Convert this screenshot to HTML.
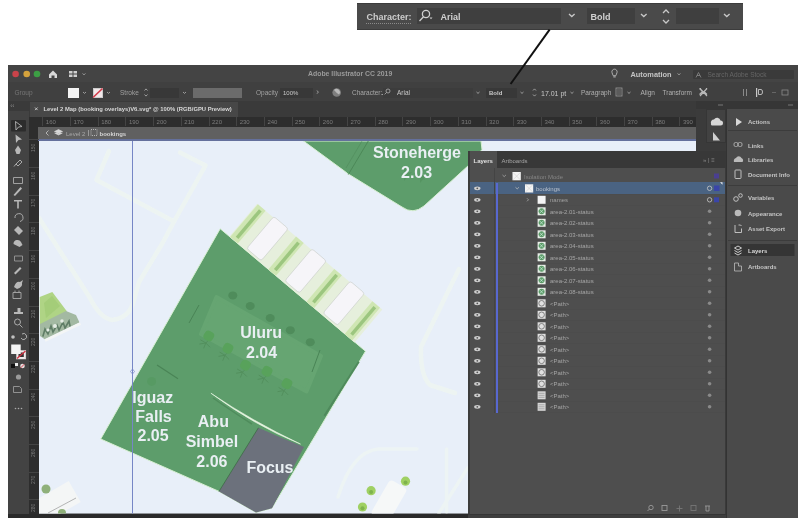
<!DOCTYPE html>
<html><head><meta charset="utf-8">
<style>
*{margin:0;padding:0;box-sizing:border-box}
html,body{width:810px;height:523px;overflow:hidden;background:#fff;font-family:"Liberation Sans",sans-serif}
body{filter:blur(0.4px)}
.a{position:absolute}
.t{position:absolute;white-space:nowrap;line-height:1}
svg{position:absolute;overflow:visible}
</style></head><body>
<!-- callout bar -->
<div class="a" style="left:357px;top:3px;width:386px;height:27px;background:#4a4a4a;border-top:1px solid #3c3c3c;border-bottom:1px solid #3c3c3c"></div>
<div class="t" style="left:366.5px;top:12.5px;font-size:9px;color:#cccccc;font-weight:bold">Character:</div>
<div class="a" style="left:366px;top:23px;width:45px;border-top:1px dotted #8a8a8a"></div>
<div class="a" style="left:417px;top:8px;width:144px;height:16px;background:#3f3f3f"></div>
<div class="a" style="left:587px;top:8px;width:48px;height:16px;background:#3f3f3f"></div>
<div class="a" style="left:676px;top:8px;width:43px;height:16px;background:#3f3f3f"></div>
<div class="t" style="left:440.5px;top:12.5px;font-size:9px;color:#d0d0d0;font-weight:bold">Arial</div>
<div class="t" style="left:590.5px;top:12.5px;font-size:9px;color:#d0d0d0;font-weight:bold">Bold</div>
<svg style="left:0;top:0" width="810" height="40">
 <g fill="none" stroke="#cfcfcf" stroke-width="1.3">
  <circle cx="426" cy="14" r="3.6"/><line x1="423.5" y1="16.8" x2="419.5" y2="21"/>
 </g>
 <path d="M429.5 17.5 l3 0 l-1.5 1.8z" fill="#cfcfcf"/>
 <g fill="none" stroke="#c8c8c8" stroke-width="1.3">
  <path d="M569 14 l2.8 2.6 l2.8 -2.6"/>
  <path d="M641 14 l2.8 2.6 l2.8 -2.6"/>
  <path d="M724 14 l2.8 2.6 l2.8 -2.6"/>
  <path d="M663 13 l3 -3 l3 3"/><path d="M663 20 l3 3 l3 -3"/>
 </g>
</svg>
<!-- app window -->
<div class="a" style="left:8px;top:65px;width:790px;height:453px;background:#3b3b3b"></div>
<div class="a" style="left:8px;top:65px;width:790px;height:17px;background:#444"></div>
<div class="a" style="left:8px;top:82px;width:790px;height:19px;background:#404040"></div>
<div class="a" style="left:8px;top:101px;width:790px;height:16px;background:#3a3a3a"></div>
<div class="a" style="left:30px;top:102px;width:208px;height:15px;background:#474747"></div>
<div class="a" style="left:8px;top:101px;width:21px;height:417px;background:#434343"></div>
<div class="a" style="left:8px;top:101px;width:21px;height:10px;background:#3a3a3a"></div>
<div class="a" style="left:29px;top:117px;width:10px;height:398px;background:#2d2d2d"></div>
<div class="a" style="left:38px;top:117px;width:658px;height:10px;background:#2d2d2d"></div>
<div class="a" style="left:38px;top:127px;width:658px;height:12.5px;background:#606060"></div>
<div class="a" style="left:38px;top:139.3px;width:658px;height:1.7px;background:#64709c"></div>
<div class="a" style="left:8px;top:514px;width:790px;height:4px;background:#2a2a2a"></div>
<svg style="left:0;top:0" width="810" height="110">
 <circle cx="15.6" cy="74" r="3.3" fill="#c9434a"/>
 <circle cx="26.7" cy="74" r="3.3" fill="#d4a23c"/>
 <circle cx="37" cy="74" r="3.3" fill="#3c9e44"/>
 <path d="M49 74.5 l4 -4 l4 4 v3.5 h-2.5 v-2.5 h-3 v2.5 h-2.5z" fill="#d8d8d8"/>
 <rect x="69" y="71" width="3.5" height="2.5" fill="#cfcfcf"/><rect x="73.5" y="71" width="3.5" height="2.5" fill="#cfcfcf"/>
 <rect x="69" y="74.5" width="3.5" height="2.5" fill="#cfcfcf"/><rect x="73.5" y="74.5" width="3.5" height="2.5" fill="#cfcfcf"/>
 <path d="M82.5 73.5 l1.5 1.3 l1.5 -1.3" fill="none" stroke="#aaa" stroke-width="0.8"/>
 <path d="M612 72.5 a2.6 2.6 0 1 1 5 0 c0 1.4 -1 2 -1.2 3.2 h-2.6 c-0.2 -1.2 -1.2 -1.8 -1.2 -3.2z" fill="none" stroke="#bbb" stroke-width="0.9"/>
 <rect x="613.3" y="76.4" width="2.4" height="1" fill="#bbb"/>
 <path d="M677.5 73.5 l1.5 1.3 l1.5 -1.3" fill="none" stroke="#aaa" stroke-width="0.8"/>
</svg>
<div class="t" style="left:308px;top:71.2px;font-size:6.9px;color:#9a9a9a;font-weight:bold">Adobe Illustrator CC 2019</div>
<div class="t" style="left:630.5px;top:70.5px;font-size:7.4px;color:#c4c4c4;font-weight:bold">Automation</div>
<div class="a" style="left:693px;top:70px;width:101px;height:9px;background:#3a3a3a;border-radius:1px"></div>
<svg style="left:0;top:0" width="810" height="110"><path d="M696 77.5 l2.5 -5 l2.5 5 M697 75.5 h3" fill="none" stroke="#888" stroke-width="0.8"/></svg>
<div class="t" style="left:707.5px;top:71.5px;font-size:6.5px;color:#666;">Search Adobe Stock</div>
<div class="t" style="left:14.5px;top:90px;font-size:6.5px;color:#767676;">Group</div>
<div class="a" style="left:68px;top:88px;width:11px;height:10px;background:#f4f4f4"></div>
<div class="a" style="left:92.5px;top:88px;width:10.5px;height:10px;background:#f2e8ea;border:0.5px solid #ccc"></div>
<svg style="left:0;top:0" width="810" height="110">
 <line x1="93" y1="97.5" x2="102.5" y2="88.5" stroke="#d23a4a" stroke-width="1.6"/>
 <g fill="none" stroke="#a8a8a8" stroke-width="0.9">
  <path d="M83 92 l1.5 1.4 l1.5 -1.4"/><path d="M107 92 l1.5 1.4 l1.5 -1.4"/>
  <path d="M183 92 l1.5 1.4 l1.5 -1.4"/><path d="M476.5 92 l1.5 1.4 l1.5 -1.4"/>
  <path d="M520.5 92 l1.5 1.4 l1.5 -1.4"/><path d="M570.5 92 l1.5 1.4 l1.5 -1.4"/>
  <path d="M627.5 92 l1.5 1.4 l1.5 -1.4"/>
  <path d="M144.5 90.5 l1.5 -1.6 l1.5 1.6 M144.5 94.5 l1.5 1.6 l1.5 -1.6"/>
  <path d="M533 90.5 l1.5 -1.6 l1.5 1.6 M533 94.5 l1.5 1.6 l1.5 -1.6"/>
  <path d="M317 90.5 l1.3 1.6 l-1.3 1.6"/>
  <circle cx="385.5" cy="91.5" r="2"/><path d="M384 93 l-2 2"/>
 </g>
 <circle cx="336.7" cy="92.5" r="4.3" fill="#7e7e7e"/>
 <path d="M334 90 a3.3 3.3 0 0 1 5 4.5 l-2.2 -1.6z" fill="#b8b8b8"/>
 <g fill="none" stroke="#b8b8b8" stroke-width="1.1">
  <path d="M699.5 88.5 l3 3 l-3 3 M707 88.5 l-3 3 l3 3 M700 88.5 l7 7.5 M707 88.5 l-7 7.5"/>
 </g>
 <rect x="616" y="88" width="6" height="8" fill="none" stroke="#9a9a9a" stroke-width="0.8"/>
 <path d="M617 90h4M617 92h4M617 94h4" stroke="#9a9a9a" stroke-width="0.6"/>
 <g fill="#8a8a8a"><rect x="743" y="89" width="1" height="7"/><rect x="746" y="89" width="1" height="7"/></g>
 <rect x="756" y="88" width="1.2" height="9" fill="#c8c8c8"/>
 <path d="M758.5 89.5 h2.5 a1.5 2.5 0 0 1 0 5 h-2.5z" fill="none" stroke="#c8c8c8" stroke-width="0.9"/>
 <rect x="772" y="92" width="4" height="1" fill="#666"/>
 <rect x="782" y="90" width="6" height="5" fill="none" stroke="#8a8a8a" stroke-width="0.8"/>
</svg>
<div class="t" style="left:120px;top:90px;font-size:6.5px;color:#a0a0a0;">Stroke</div>
<div class="a" style="left:150px;top:87.5px;width:29px;height:10px;background:#383838"></div>
<div class="a" style="left:193px;top:87.5px;width:49px;height:10.5px;background:#6b6b6b"></div>
<div class="t" style="left:256px;top:90px;font-size:6.5px;color:#a0a0a0;">Opacity</div>
<div class="a" style="left:280px;top:87.5px;width:33px;height:10px;background:#383838"></div>
<div class="t" style="left:283px;top:90px;font-size:6px;color:#c8c8c8;">100%</div>
<div class="t" style="left:352px;top:90px;font-size:6.5px;color:#a8a8a8;">Character:</div>
<div class="a" style="left:383px;top:87.5px;width:90px;height:10px;background:#3c3c3c"></div>
<svg style="left:0;top:0" width="810" height="110"><g fill="none" stroke="#b0b0b0" stroke-width="0.8"><circle cx="388" cy="91" r="2"/><path d="M386.6 92.4 l-2 2"/></g></svg>
<div class="t" style="left:397px;top:90px;font-size:6.5px;color:#c8c8c8;">Arial</div>
<div class="a" style="left:485.5px;top:87.5px;width:31px;height:10px;background:#383838"></div>
<div class="t" style="left:489px;top:90px;font-size:6px;color:#c8c8c8;font-weight:bold">Bold</div>
<div class="t" style="left:541px;top:89.5px;font-size:7px;color:#c8c8c8;">17.01 pt</div>
<div class="t" style="left:581px;top:90px;font-size:6.5px;color:#b0b0b0;">Paragraph</div>
<div class="t" style="left:640.5px;top:90px;font-size:6.5px;color:#b0b0b0;">Align</div>
<div class="t" style="left:662.5px;top:90px;font-size:6.5px;color:#b0b0b0;">Transform</div>
<svg style="left:0;top:0" width="810" height="120"><g fill="none" stroke="#888" stroke-width="0.7"><path d="M12 104.5 l-1.3 1.2 l1.3 1.2 M14 104.5 l-1.3 1.2 l1.3 1.2"/></g>
<path d="M35 107.5 l2.6 2.6 M37.6 107.5 l-2.6 2.6" stroke="#ccc" stroke-width="0.9"/></svg>
<div class="t" style="left:43.5px;top:106.5px;font-size:5.85px;color:#d8d8d8;font-weight:bold">Level 2 Map (booking overlays)V6.svg* @ 100% (RGB/GPU Preview)</div>
<div class="a" style="left:42.3px;top:117px;width:1px;height:9px;background:#444"></div><div class="t" style="left:45.8px;top:119px;font-size:6px;color:#7c7c7c">160</div><div class="a" style="left:70.0px;top:117px;width:1px;height:9px;background:#444"></div><div class="t" style="left:73.5px;top:119px;font-size:6px;color:#7c7c7c">170</div><div class="a" style="left:97.7px;top:117px;width:1px;height:9px;background:#444"></div><div class="t" style="left:101.2px;top:119px;font-size:6px;color:#7c7c7c">180</div><div class="a" style="left:125.4px;top:117px;width:1px;height:9px;background:#444"></div><div class="t" style="left:128.9px;top:119px;font-size:6px;color:#7c7c7c">190</div><div class="a" style="left:153.1px;top:117px;width:1px;height:9px;background:#444"></div><div class="t" style="left:156.6px;top:119px;font-size:6px;color:#7c7c7c">200</div><div class="a" style="left:180.8px;top:117px;width:1px;height:9px;background:#444"></div><div class="t" style="left:184.3px;top:119px;font-size:6px;color:#7c7c7c">210</div><div class="a" style="left:208.5px;top:117px;width:1px;height:9px;background:#444"></div><div class="t" style="left:212.0px;top:119px;font-size:6px;color:#7c7c7c">220</div><div class="a" style="left:236.2px;top:117px;width:1px;height:9px;background:#444"></div><div class="t" style="left:239.7px;top:119px;font-size:6px;color:#7c7c7c">230</div><div class="a" style="left:263.9px;top:117px;width:1px;height:9px;background:#444"></div><div class="t" style="left:267.4px;top:119px;font-size:6px;color:#7c7c7c">240</div><div class="a" style="left:291.6px;top:117px;width:1px;height:9px;background:#444"></div><div class="t" style="left:295.1px;top:119px;font-size:6px;color:#7c7c7c">250</div><div class="a" style="left:319.3px;top:117px;width:1px;height:9px;background:#444"></div><div class="t" style="left:322.8px;top:119px;font-size:6px;color:#7c7c7c">260</div><div class="a" style="left:347.0px;top:117px;width:1px;height:9px;background:#444"></div><div class="t" style="left:350.5px;top:119px;font-size:6px;color:#7c7c7c">270</div><div class="a" style="left:374.7px;top:117px;width:1px;height:9px;background:#444"></div><div class="t" style="left:378.2px;top:119px;font-size:6px;color:#7c7c7c">280</div><div class="a" style="left:402.4px;top:117px;width:1px;height:9px;background:#444"></div><div class="t" style="left:405.9px;top:119px;font-size:6px;color:#7c7c7c">290</div><div class="a" style="left:430.1px;top:117px;width:1px;height:9px;background:#444"></div><div class="t" style="left:433.6px;top:119px;font-size:6px;color:#7c7c7c">300</div><div class="a" style="left:457.8px;top:117px;width:1px;height:9px;background:#444"></div><div class="t" style="left:461.3px;top:119px;font-size:6px;color:#7c7c7c">310</div><div class="a" style="left:485.5px;top:117px;width:1px;height:9px;background:#444"></div><div class="t" style="left:489.0px;top:119px;font-size:6px;color:#7c7c7c">320</div><div class="a" style="left:513.2px;top:117px;width:1px;height:9px;background:#444"></div><div class="t" style="left:516.7px;top:119px;font-size:6px;color:#7c7c7c">330</div><div class="a" style="left:540.9px;top:117px;width:1px;height:9px;background:#444"></div><div class="t" style="left:544.4px;top:119px;font-size:6px;color:#7c7c7c">340</div><div class="a" style="left:568.6px;top:117px;width:1px;height:9px;background:#444"></div><div class="t" style="left:572.1px;top:119px;font-size:6px;color:#7c7c7c">350</div><div class="a" style="left:596.3px;top:117px;width:1px;height:9px;background:#444"></div><div class="t" style="left:599.8px;top:119px;font-size:6px;color:#7c7c7c">360</div><div class="a" style="left:624.0px;top:117px;width:1px;height:9px;background:#444"></div><div class="t" style="left:627.5px;top:119px;font-size:6px;color:#7c7c7c">370</div><div class="a" style="left:651.7px;top:117px;width:1px;height:9px;background:#444"></div><div class="t" style="left:655.2px;top:119px;font-size:6px;color:#7c7c7c">380</div><div class="a" style="left:679.4px;top:117px;width:1px;height:9px;background:#444"></div><div class="t" style="left:682.9px;top:119px;font-size:6px;color:#7c7c7c">390</div>
<!-- canvas -->
<svg style="left:0;top:0" width="810" height="523">
<defs><clipPath id="cv"><rect x="39" y="141" width="657" height="372.5"/></clipPath></defs>
<g clip-path="url(#cv)">
 <rect x="39" y="141" width="657" height="373" fill="#e8eff9"/>
 <g fill="none" stroke="#f0f7f0" stroke-width="4.5" stroke-linejoin="round" stroke-linecap="round" opacity="0.7">
  <path d="M109 151 L96.5 180 L174 221.5 L205.5 165.5 L180 152.5"/>
  <path d="M174 221.5 L162 244 L139 282 L134 300 Q130 318 112 320 Q100 318 90 298 L39 218"/>
  <path d="M459 269 L421 347 Q420 375 430 385 L455 393"/>
  
 </g>
 <!-- stonehenge -->
 <path d="M303.5 141 L345 171.5 L347.5 173.5 L402 207 Q413 215 424 206 L469 165 L482 149.5 L481 141 Z" fill="#5d9d6b" stroke="#d7efd2" stroke-width="1"/>
 <g stroke="#4b8656" stroke-width="0.9" fill="none"><path d="M368.3 141 L348.3 174.5"/><path d="M362 141 L346 168" opacity="0.5"/></g>
 <g fill="#54935f" opacity="0.8"><path d="M404 165 l6 12 l-10 -3 l12 -2 l-8 9z"/><path d="M420 168 l5 12 l-9 -4 l11 -1 l-7 8z"/></g>
 <!-- main block -->
 <path d="M220.2 228.7 L365.5 351.2 L272 508.2 L256 512.5 L219 491.4 L100.7 439 Z" fill="#5d9d6b" stroke="#d7efd2" stroke-width="1"/>
 <path d="M358.8 361.8 L324.4 415.7" stroke="#4f8a5c" stroke-width="2"/>
 <g transform="translate(220.2,228.7) rotate(40.25)"><rect x="12" y="-43" width="164" height="43" fill="#e6efdc"/><rect x="13" y="-43" width="10" height="43" fill="#cfe6b3"/><rect x="17" y="-40" width="3.5" height="36" fill="#9cc67f"/><rect x="33" y="-44" width="19" height="42" rx="2.5" fill="#f6f5f9" stroke="#c9cec9" stroke-width="0.6"/><rect x="63" y="-43" width="10" height="43" fill="#cfe6b3"/><rect x="67" y="-40" width="3.5" height="36" fill="#9cc67f"/><rect x="83" y="-44" width="19" height="42" rx="2.5" fill="#f6f5f9" stroke="#c9cec9" stroke-width="0.6"/><rect x="113" y="-43" width="10" height="43" fill="#cfe6b3"/><rect x="117" y="-40" width="3.5" height="36" fill="#9cc67f"/><rect x="133" y="-44" width="19" height="42" rx="2.5" fill="#f6f5f9" stroke="#c9cec9" stroke-width="0.6"/><rect x="163" y="-43" width="10" height="43" fill="#cfe6b3"/><rect x="167" y="-40" width="3.5" height="36" fill="#9cc67f"/></g>
 <path d="M216.5 297 L321 356 L306.5 391.5 L201 334 Z" fill="#66a572" stroke="#66a572" stroke-width="4" stroke-linejoin="round"/>
 <g fill="#4f8c5b">
  <ellipse cx="232.8" cy="295.4" rx="4.5" ry="4"/><ellipse cx="250.2" cy="306" rx="4.5" ry="4"/>
  <ellipse cx="270.2" cy="318" rx="4.5" ry="4"/><ellipse cx="290.3" cy="330.2" rx="4.5" ry="4"/>
  <ellipse cx="310.3" cy="342.2" rx="4.5" ry="4"/>
 </g>
 <g stroke="#4f8a58" stroke-width="1" fill="none" stroke-linecap="round" opacity="0.7"><path d="M205.8 343 l-6 1 M205.8 343 l-2 5 M205.8 343 l4 4 M205.8 343 l3 -3 M205.8 343 l-5 -3"/><path d="M224.9 355.3 l-6 1 M224.9 355.3 l-2 5 M224.9 355.3 l4 4 M224.9 355.3 l3 -3 M224.9 355.3 l-5 -3"/><path d="M242.5 372.2 l-6 1 M242.5 372.2 l-2 5 M242.5 372.2 l4 4 M242.5 372.2 l3 -3 M242.5 372.2 l-5 -3"/><path d="M264 378.3 l-6 1 M264 378.3 l-2 5 M264 378.3 l4 4 M264 378.3 l3 -3 M264 378.3 l-5 -3"/><path d="M283.9 390.6 l-6 1 M283.9 390.6 l-2 5 M283.9 390.6 l4 4 M283.9 390.6 l3 -3 M283.9 390.6 l-5 -3"/></g><g fill="#58a25b"><rect x="203.8" y="331" width="10" height="10" rx="4" transform="rotate(30 208.8 336)"/><rect x="222.9" y="343.3" width="10" height="10" rx="4" transform="rotate(30 227.9 348.3)"/><rect x="240.5" y="360.2" width="10" height="10" rx="4" transform="rotate(30 245.5 365.2)"/><rect x="262" y="366.3" width="10" height="10" rx="4" transform="rotate(30 267 371.3)"/><rect x="281.9" y="378.6" width="10" height="10" rx="4" transform="rotate(30 286.9 383.6)"/></g>
 <g stroke="#4a8456" stroke-width="1" fill="none"><path d="M320 350 l-8 22 M199 305 l-10 18"/></g>
 <path d="M157 365 L178 378.7" stroke="#4a8456" stroke-width="1.2"/>
 <circle cx="151.6" cy="381.4" r="4.5" fill="#569a62" opacity="0.8"/>
 <!-- focus -->
 <path d="M258.4 427.8 Q281 438 304 447 L272 508.2 L256 512.5 L219 491.4 Z" fill="#6c717c"/>
 <path d="M213 398 Q236 414 252 424" fill="none" stroke="#4f8c5c" stroke-width="1.5"/><path d="M210.9 393.2 Q252 421 300.5 444.1 Q254.6 425.6 210.9 393.2 Z" fill="#e6f5e0" stroke="#e6f5e0" stroke-width="0.6"/>
 <path d="M258.4 427.8 L219 491.4" stroke="#3f6a48" stroke-width="0.8" fill="none"/>
 <!-- small diamond left -->
 <path d="M39.7 297 L52.3 291.9 L66.1 310.2 L68 316 L40 330 Z" fill="#afd485"/>
 <path d="M44 303 L52 296 L60 306 L46 318z" fill="#9cc872" opacity="0.6"/>
 <path d="M40 324 L66 311 L76 315 L79.5 322.5 L45 339.5 L40 336 Z" fill="#a3b9a2"/>
 <g stroke="#5f7d66" stroke-width="1.6" fill="none" stroke-linecap="round">
  <path d="M43 336 l2 -7 l3 5 l3 -8 l2 6 l4 -7 l2 5 l4 -8 l2 6 l4 -7 l1 5"/>
 </g>
 <g fill="#e4ece4"><circle cx="55" cy="326" r="2"/><circle cx="62" cy="321" r="1.8"/><circle cx="48" cy="330" r="1.6"/></g>
 <path d="M45 340.5 L80.5 323.5" stroke="#f4f6f6" stroke-width="3"/>
 <!-- bottom left -->
 <g transform="translate(60,500) rotate(-30)">
  <rect x="-25" y="-12" width="42" height="24" fill="#f4f6f6"/>
 </g>
 <circle cx="46" cy="489" r="4.5" fill="#8fb07a"/>
 <circle cx="62" cy="513" r="4" fill="#8fb07a"/>
 <path d="M48 513 L76 498" stroke="#888" stroke-width="0.6"/>
 <!-- bottom right -->
 <g fill="none" stroke="#eef5f3" stroke-width="3.5" opacity="0.8" stroke-linecap="round">
  <path d="M338 497 Q352 452 378 449 L417 449"/>
  <path d="M446.6 449 L446.6 512"/>
  <path d="M467.7 468 L439 513"/>
 </g>
 <g transform="translate(391,498) rotate(30)"><rect x="-10" y="-16" width="20" height="40" rx="4" fill="#f6f8f8"/></g>
 <g fill="#9fd063"><circle cx="405.5" cy="481.2" r="4.6"/><circle cx="371.1" cy="490.7" r="4.6"/><circle cx="362.5" cy="507" r="4.6"/></g>
 <g fill="#7eb34d"><circle cx="405.5" cy="482.5" r="2"/><circle cx="371.1" cy="492" r="2"/><circle cx="362.5" cy="508.3" r="2"/></g>
 <!-- guide -->
 <rect x="132" y="141" width="1" height="373" fill="#7686c6"/>
 <path d="M132.5 369 l2 2.5 l-2 2.5 l-2 -2.5z" fill="none" stroke="#7686c6" stroke-width="0.7"/>
</g>
<g fill="#e9eff3" font-family="Liberation Sans" font-weight="bold" font-size="16">
 <text x="373" y="158">Stoneherge</text>
 <text x="401" y="177.5">2.03</text>
 <text x="240.2" y="337.8">Uluru</text>
 <text x="246" y="357.8">2.04</text>
 <text x="132.3" y="402.5">Iguaz</text>
 <text x="135.3" y="422">Falls</text>
 <text x="137.5" y="441">2.05</text>
 <text x="197.8" y="426.5">Abu</text>
 <text x="185.7" y="446.5">Simbel</text>
 <text x="196.3" y="466.5">2.06</text>
 <text x="246.4" y="472.5">Focus</text>
</g>
</svg>

<div class="a" style="left:29px;top:139.3px;width:10px;height:1px;background:#444"></div><div class="t" style="left:31px;top:151.8px;font-size:5px;color:#7a7a7a;transform:rotate(-90deg);transform-origin:0 0">150</div><div class="a" style="left:29px;top:167.0px;width:10px;height:1px;background:#444"></div><div class="t" style="left:31px;top:179.5px;font-size:5px;color:#7a7a7a;transform:rotate(-90deg);transform-origin:0 0">160</div><div class="a" style="left:29px;top:194.7px;width:10px;height:1px;background:#444"></div><div class="t" style="left:31px;top:207.2px;font-size:5px;color:#7a7a7a;transform:rotate(-90deg);transform-origin:0 0">170</div><div class="a" style="left:29px;top:222.4px;width:10px;height:1px;background:#444"></div><div class="t" style="left:31px;top:234.9px;font-size:5px;color:#7a7a7a;transform:rotate(-90deg);transform-origin:0 0">180</div><div class="a" style="left:29px;top:250.1px;width:10px;height:1px;background:#444"></div><div class="t" style="left:31px;top:262.6px;font-size:5px;color:#7a7a7a;transform:rotate(-90deg);transform-origin:0 0">190</div><div class="a" style="left:29px;top:277.8px;width:10px;height:1px;background:#444"></div><div class="t" style="left:31px;top:290.3px;font-size:5px;color:#7a7a7a;transform:rotate(-90deg);transform-origin:0 0">200</div><div class="a" style="left:29px;top:305.5px;width:10px;height:1px;background:#444"></div><div class="t" style="left:31px;top:318.0px;font-size:5px;color:#7a7a7a;transform:rotate(-90deg);transform-origin:0 0">210</div><div class="a" style="left:29px;top:333.2px;width:10px;height:1px;background:#444"></div><div class="t" style="left:31px;top:345.7px;font-size:5px;color:#7a7a7a;transform:rotate(-90deg);transform-origin:0 0">220</div><div class="a" style="left:29px;top:360.9px;width:10px;height:1px;background:#444"></div><div class="t" style="left:31px;top:373.4px;font-size:5px;color:#7a7a7a;transform:rotate(-90deg);transform-origin:0 0">230</div><div class="a" style="left:29px;top:388.6px;width:10px;height:1px;background:#444"></div><div class="t" style="left:31px;top:401.1px;font-size:5px;color:#7a7a7a;transform:rotate(-90deg);transform-origin:0 0">240</div><div class="a" style="left:29px;top:416.3px;width:10px;height:1px;background:#444"></div><div class="t" style="left:31px;top:428.8px;font-size:5px;color:#7a7a7a;transform:rotate(-90deg);transform-origin:0 0">250</div><div class="a" style="left:29px;top:444.0px;width:10px;height:1px;background:#444"></div><div class="t" style="left:31px;top:456.5px;font-size:5px;color:#7a7a7a;transform:rotate(-90deg);transform-origin:0 0">260</div><div class="a" style="left:29px;top:471.7px;width:10px;height:1px;background:#444"></div><div class="t" style="left:31px;top:484.2px;font-size:5px;color:#7a7a7a;transform:rotate(-90deg);transform-origin:0 0">270</div><div class="a" style="left:29px;top:499.4px;width:10px;height:1px;background:#444"></div><div class="t" style="left:31px;top:511.9px;font-size:5px;color:#7a7a7a;transform:rotate(-90deg);transform-origin:0 0">280</div>
<!-- tools icons -->
<svg style="left:0;top:0" width="40" height="523">
 <rect x="11" y="120" width="15" height="11.5" rx="1" fill="#2c2c2c"/>
 <g fill="none" stroke="#b4b4b4" stroke-width="0.9" stroke-linejoin="round">
  <path d="M15.5 121.5 L22 126.5 L18.5 127 L16 130 Z"/>
  <path d="M13.5 177.5 h9 v6 h-9z" stroke="#aaa"/>
  <path d="M16 164 l4 -4 l2 2 l-4 4z M16 164 l-2 2.5"/>
  <path d="M15 218 a4 4 0 1 1 5 3.5" />
  <path d="M14.5 256 h8 v5 h-8z" stroke="#999"/>
  <circle cx="17.5" cy="322" r="3"/><path d="M19.5 324.5 l3 3"/>
  <path d="M13 292.5 h8 v6 h-8z M15 290.5 v2 M19 290.5 v2" stroke="#aaa"/>
 </g>
 <g fill="#b8b8b8">
  <path d="M15.5 134.5 L22 139.5 L18.5 140 L16 143 Z"/>
  <path d="M15 150 l3 -4.5 l3 4.5 l-1.5 4 h-3z"/>
  <path d="M13.5 195 l7 -8 l1.5 1.5 l-7 7.5z"/>
  <path d="M14 200 h8 v1.6 h-3.2 v7 h-1.6 v-7 h-3.2z"/>
  <path d="M14 230 l4 -4 l5 5 l-4 4z"/>
  <path d="M13.5 244 a4 4 0 0 1 7.5 -2 l1.5 3 l-3 2 z"/>
  <path d="M14 273 l6 -6 l1.5 1.5 l-6 6z"/>
  <path d="M14 287 q2 -6 6 -5 l3 -2 l-1 3 q1 4 -5 6z"/>
  <path d="M14 312 h3.5 v-4 h3 v4 h2.5 v2 h-9z"/>
 </g>
 <g fill="#c0c0c0"><circle cx="13" cy="337" r="1.8"/><path d="M22 334 a3 3 0 1 1 -1 4" fill="none" stroke="#bbb" stroke-width="0.9"/></g>
 <rect x="16.5" y="350.5" width="9.3" height="8.5" fill="#f0eaea" stroke="#ddd" stroke-width="0.5"/>
 <rect x="18.5" y="352.5" width="5.3" height="4.5" fill="#333"/>
 <line x1="17" y1="358.5" x2="25.5" y2="351" stroke="#d03040" stroke-width="1.3"/>
 <rect x="11.2" y="344.5" width="9.5" height="9.5" fill="#f4f4f4"/>
 <rect x="11" y="364" width="4" height="4" fill="#111"/><rect x="15" y="363" width="3" height="3" fill="#eee"/>
 <circle cx="22.5" cy="366" r="2.3" fill="#e8e0e0"/><line x1="20.8" y1="367.8" x2="24.2" y2="364.2" stroke="#d03040" stroke-width="0.9"/>
 <circle cx="18.5" cy="377" r="2.6" fill="#9a9a9a"/>
 <path d="M13.5 392.5 h8 v-4 l-2 -2 h-6z" fill="none" stroke="#9a9a9a" stroke-width="0.9"/>
 <g fill="#aaa"><circle cx="15.5" cy="408.5" r="0.8"/><circle cx="18.5" cy="408.5" r="0.8"/><circle cx="21.5" cy="408.5" r="0.8"/></g>
</svg>

<svg style="left:0;top:0" width="810" height="150">
 <path d="M48.5 130.5 l-2.5 2.5 l2.5 2.5" fill="none" stroke="#bbb" stroke-width="0.9"/>
 <path d="M58.5 129.5 l4 2 l-4 2 l-4 -2z M54.5 133 l4 2 l4 -2" fill="#d8d8d8" stroke="#d8d8d8" stroke-width="0.6" stroke-linejoin="round"/>
 <rect x="91" y="129.5" width="6" height="6" fill="none" stroke="#ccc" stroke-width="0.8" stroke-dasharray="1 1"/>
</svg>
<div class="t" style="left:66px;top:130.5px;font-size:6px;color:#a8a8a8;">Level 2</div>
<div class="a" style="left:88px;top:130px;width:1px;height:6px;background:#999"></div>
<div class="t" style="left:99.5px;top:130.5px;font-size:6px;color:#d4d4d4;font-weight:bold">bookings</div>
<div class="t" style="left:697px;top:119px;font-size:6px;color:#888;">&laquo;</div>

<div class="a" style="left:696px;top:101px;width:102px;height:8px;background:#363636"></div>
<div class="a" style="left:696px;top:109px;width:30px;height:42px;background:#3b3b3b"></div>
<div class="a" style="left:705.5px;top:109px;width:20px;height:34px;background:#424242;border:1px solid #363636"></div>
<div class="a" style="left:726px;top:109px;width:72px;height:409px;background:#4a4a4a;border-left:1px solid #333"></div>
<svg style="left:0;top:0" width="810" height="523">
 <g fill="#777"><rect x="718" y="104.5" width="5" height="1"/><rect x="788" y="104.5" width="5" height="1"/></g>
 <path d="M711 123.5 a3 3 0 0 1 3 -4 a3.5 3.5 0 0 1 6.5 1 a2.5 2.5 0 0 1 0 5 h-8 a1.5 1.5 0 0 1 -1.5 -2z" fill="#d8d8d8"/>
 <path d="M713 140.5 v-8.5 l7 8.5z" fill="#d0d0d0"/>
 <path d="M736 118 l6 4 l-6 4z" fill="#d8d8d8"/>
 <rect x="728" y="130" width="69" height="1" fill="#3c3c3c"/>
 <rect x="734" y="142.5" width="4" height="4" rx="1.5" fill="none" stroke="#bbb" stroke-width="0.8"/>
 <rect x="738" y="142.5" width="4" height="4" rx="1.5" fill="none" stroke="#bbb" stroke-width="0.8"/>
 <path d="M734 162 a3 3 0 0 1 2 -4 a3 3 0 0 1 5.5 0 a2.5 2.5 0 0 1 1 4z" fill="#bbb"/>
 <rect x="735" y="170" width="6" height="8.5" rx="0.8" fill="none" stroke="#ccc" stroke-width="0.9"/>
 <rect x="728" y="185" width="69" height="1" fill="#3c3c3c"/>
 <circle cx="736" cy="199" r="2.3" fill="none" stroke="#ccc" stroke-width="0.9"/><circle cx="740.5" cy="195.5" r="1.8" fill="none" stroke="#ccc" stroke-width="0.9"/>
 <circle cx="738" cy="213" r="3.3" fill="#bbb"/>
 <path d="M735 225 v7.5 h6.5 v-4 M738.5 225 h2 l1 1" fill="none" stroke="#ccc" stroke-width="0.9"/>
 <rect x="728" y="240" width="69" height="1" fill="#3c3c3c"/>
 <rect x="730.5" y="244" width="64" height="12" fill="#353535"/>
 <path d="M734.5 248 l3.5 -2 l3.5 2 l-3.5 2z M734.5 250.5 l3.5 2 l3.5 -2 M734.5 253 l3.5 2 l3.5 -2" fill="none" stroke="#ddd" stroke-width="0.9" stroke-linejoin="round"/>
 <path d="M734.5 263 h4 v3 h3 v5 h-7z" fill="none" stroke="#bbb" stroke-width="0.8"/>
</svg>
<div class="t" style="left:748px;top:119px;font-size:6px;color:#c4c4c4;font-weight:bold">Actions</div>
<div class="t" style="left:748px;top:142.5px;font-size:6px;color:#c4c4c4;font-weight:bold">Links</div>
<div class="t" style="left:748px;top:157px;font-size:6px;color:#c4c4c4;font-weight:bold">Libraries</div>
<div class="t" style="left:748px;top:172px;font-size:6px;color:#c4c4c4;font-weight:bold">Document Info</div>
<div class="t" style="left:748px;top:195px;font-size:6px;color:#c4c4c4;font-weight:bold">Variables</div>
<div class="t" style="left:748px;top:210.5px;font-size:6px;color:#c4c4c4;font-weight:bold">Appearance</div>
<div class="t" style="left:748px;top:226px;font-size:6px;color:#c4c4c4;font-weight:bold">Asset Export</div>
<div class="t" style="left:748px;top:248px;font-size:6px;color:#d8d8d8;font-weight:bold">Layers</div>
<div class="t" style="left:748px;top:263.5px;font-size:6px;color:#c4c4c4;font-weight:bold">Artboards</div>

<div class="a" style="left:468px;top:151px;width:258px;height:366px;background:#4e4e4e;border-right:1px solid #3a3a3a"></div>
<div class="a" style="left:468px;top:151px;width:258px;height:16.5px;background:#383838"></div>
<div class="a" style="left:468px;top:151px;width:29px;height:16.5px;background:#4e4e4e"></div>
<div class="t" style="left:473.5px;top:157.5px;font-size:6px;color:#e0e0e0;font-weight:bold">Layers</div>
<div class="t" style="left:501.5px;top:157.5px;font-size:6px;color:#a6a6a6;">Artboards</div>
<div class="t" style="left:703px;top:157px;font-size:6px;color:#888;">&raquo; | &#8801;</div>
<div class="a" style="left:468px;top:182.2px;width:257px;height:11.8px;background:#4a6382"></div>
<div class="a" style="left:494px;top:167.5px;width:1px;height:245px;background:#444"></div>
<div class="a" style="left:468px;top:514px;width:258px;height:4px;background:#3e3e3e;border-top:1px solid #353535"></div>
<div class="a" style="left:468px;top:151px;width:1.5px;height:363px;background:#3c3c3c"></div>
<div class="a" style="left:496.3px;top:182.5px;width:1.6px;height:230px;background:#5868d0"></div>
<div class="t" style="left:524px;top:173.5px;font-size:6px;color:#858585;">Isolation Mode</div><div class="a" style="left:498px;top:193.9px;width:227px;height:1px;background:#4c4c4c"></div><div class="t" style="left:536px;top:185.8px;font-size:6px;color:#b8c0cc;">bookings</div><div class="a" style="left:498px;top:205.4px;width:227px;height:1px;background:#4c4c4c"></div><div class="t" style="left:550px;top:197.3px;font-size:6px;color:#a0a0a0;">names</div><div class="a" style="left:498px;top:216.9px;width:227px;height:1px;background:#4c4c4c"></div><div class="t" style="left:550px;top:208.8px;font-size:6px;color:#a6a6a6;">area-2.01-status</div><div class="a" style="left:498px;top:228.4px;width:227px;height:1px;background:#4c4c4c"></div><div class="t" style="left:550px;top:220.3px;font-size:6px;color:#a6a6a6;">area-2.02-status</div><div class="a" style="left:498px;top:239.9px;width:227px;height:1px;background:#4c4c4c"></div><div class="t" style="left:550px;top:231.8px;font-size:6px;color:#a6a6a6;">area-2.03-status</div><div class="a" style="left:498px;top:251.4px;width:227px;height:1px;background:#4c4c4c"></div><div class="t" style="left:550px;top:243.3px;font-size:6px;color:#a6a6a6;">area-2.04-status</div><div class="a" style="left:498px;top:262.9px;width:227px;height:1px;background:#4c4c4c"></div><div class="t" style="left:550px;top:254.8px;font-size:6px;color:#a6a6a6;">area-2.05-status</div><div class="a" style="left:498px;top:274.4px;width:227px;height:1px;background:#4c4c4c"></div><div class="t" style="left:550px;top:266.3px;font-size:6px;color:#a6a6a6;">area-2.06-status</div><div class="a" style="left:498px;top:285.9px;width:227px;height:1px;background:#4c4c4c"></div><div class="t" style="left:550px;top:277.8px;font-size:6px;color:#a6a6a6;">area-2.07-status</div><div class="a" style="left:498px;top:297.4px;width:227px;height:1px;background:#4c4c4c"></div><div class="t" style="left:550px;top:289.3px;font-size:6px;color:#a6a6a6;">area-2.08-status</div><div class="a" style="left:498px;top:308.9px;width:227px;height:1px;background:#4c4c4c"></div><div class="t" style="left:550px;top:300.8px;font-size:6px;color:#a6a6a6;">&lt;Path&gt;</div><div class="a" style="left:498px;top:320.4px;width:227px;height:1px;background:#4c4c4c"></div><div class="t" style="left:550px;top:312.3px;font-size:6px;color:#a6a6a6;">&lt;Path&gt;</div><div class="a" style="left:498px;top:331.9px;width:227px;height:1px;background:#4c4c4c"></div><div class="t" style="left:550px;top:323.8px;font-size:6px;color:#a6a6a6;">&lt;Path&gt;</div><div class="a" style="left:498px;top:343.4px;width:227px;height:1px;background:#4c4c4c"></div><div class="t" style="left:550px;top:335.3px;font-size:6px;color:#a6a6a6;">&lt;Path&gt;</div><div class="a" style="left:498px;top:354.9px;width:227px;height:1px;background:#4c4c4c"></div><div class="t" style="left:550px;top:346.8px;font-size:6px;color:#a6a6a6;">&lt;Path&gt;</div><div class="a" style="left:498px;top:366.4px;width:227px;height:1px;background:#4c4c4c"></div><div class="t" style="left:550px;top:358.3px;font-size:6px;color:#a6a6a6;">&lt;Path&gt;</div><div class="a" style="left:498px;top:377.9px;width:227px;height:1px;background:#4c4c4c"></div><div class="t" style="left:550px;top:369.8px;font-size:6px;color:#a6a6a6;">&lt;Path&gt;</div><div class="a" style="left:498px;top:389.4px;width:227px;height:1px;background:#4c4c4c"></div><div class="t" style="left:550px;top:381.3px;font-size:6px;color:#a6a6a6;">&lt;Path&gt;</div><div class="a" style="left:498px;top:400.9px;width:227px;height:1px;background:#4c4c4c"></div><div class="t" style="left:550px;top:392.8px;font-size:6px;color:#a6a6a6;">&lt;Path&gt;</div><div class="a" style="left:498px;top:412.4px;width:227px;height:1px;background:#4c4c4c"></div><div class="t" style="left:550px;top:404.3px;font-size:6px;color:#a6a6a6;">&lt;Path&gt;</div><svg style="left:0;top:0" width="810" height="523"><path d="M502.5 175.0 l1.7 1.6 l1.7 -1.6" fill="none" stroke="#aaa" stroke-width="0.8"/><rect x="512.5" y="172.0" width="8.3" height="8.3" fill="#f4f4f4"/><path d="M513 172.5 l7.3 7.3 M520.3 172.5 l-7.3 7.3" stroke="#c8c8c8" stroke-width="0.5"/><rect x="714" y="173.5" width="5" height="5" fill="#4a3f90"/><ellipse cx="477.3" cy="188.3" rx="3.2" ry="1.9" fill="#cfcfcf"/><circle cx="477.3" cy="188.3" r="0.9" fill="#555"/><path d="M515.5 187.3 l1.7 1.6 l1.7 -1.6" fill="none" stroke="#bbb" stroke-width="0.8"/><rect x="525" y="184.3" width="8.2" height="8.2" fill="#f4f4f4"/><path d="M525.5 184.8 l7.2 7.2 M532.7 184.8 l-7.2 7.2" stroke="#c8c8c8" stroke-width="0.5"/><circle cx="709.6" cy="188.3" r="2.2" fill="none" stroke="#c8c8c8" stroke-width="0.8"/><rect x="714" y="185.5" width="5.5" height="5.5" fill="#3a45a8"/><path d="M720 182.3 l2.5 0 l0 2.5z" fill="#eee"/><ellipse cx="477.3" cy="199.8" rx="3.2" ry="1.9" fill="#cfcfcf"/><circle cx="477.3" cy="199.8" r="0.9" fill="#555"/><path d="M527 198.3 l1.5 1.5 l-1.5 1.5" fill="none" stroke="#aaa" stroke-width="0.8"/><rect x="537.6" y="195.8" width="8" height="8" fill="#f4f4f4"/><circle cx="709.6" cy="199.8" r="2.2" fill="none" stroke="#c8c8c8" stroke-width="0.8"/><rect x="714" y="197.3" width="5" height="5" fill="#3a45a8"/><ellipse cx="477.3" cy="211.3" rx="3.2" ry="1.9" fill="#cfcfcf"/><circle cx="477.3" cy="211.3" r="0.9" fill="#555"/><rect x="537.6" y="207.3" width="8" height="8" fill="#e8eee8"/><circle cx="541.6" cy="211.3" r="3" fill="#5c9a68"/><path d="M539.5 209.3 l4 4 M543.5 209.3 l-4 4" stroke="#dfe" stroke-width="0.6"/><circle cx="709.6" cy="211.3" r="1.8" fill="#8a8a8a"/><ellipse cx="477.3" cy="222.8" rx="3.2" ry="1.9" fill="#cfcfcf"/><circle cx="477.3" cy="222.8" r="0.9" fill="#555"/><rect x="537.6" y="218.8" width="8" height="8" fill="#e8eee8"/><circle cx="541.6" cy="222.8" r="3" fill="#5c9a68"/><path d="M539.5 220.8 l4 4 M543.5 220.8 l-4 4" stroke="#dfe" stroke-width="0.6"/><circle cx="709.6" cy="222.8" r="1.8" fill="#8a8a8a"/><ellipse cx="477.3" cy="234.3" rx="3.2" ry="1.9" fill="#cfcfcf"/><circle cx="477.3" cy="234.3" r="0.9" fill="#555"/><rect x="537.6" y="230.3" width="8" height="8" fill="#e8eee8"/><circle cx="541.6" cy="234.3" r="3" fill="#5c9a68"/><path d="M539.5 232.3 l4 4 M543.5 232.3 l-4 4" stroke="#dfe" stroke-width="0.6"/><circle cx="709.6" cy="234.3" r="1.8" fill="#8a8a8a"/><ellipse cx="477.3" cy="245.8" rx="3.2" ry="1.9" fill="#cfcfcf"/><circle cx="477.3" cy="245.8" r="0.9" fill="#555"/><rect x="537.6" y="241.8" width="8" height="8" fill="#e8eee8"/><circle cx="541.6" cy="245.8" r="3" fill="#5c9a68"/><path d="M539.5 243.8 l4 4 M543.5 243.8 l-4 4" stroke="#dfe" stroke-width="0.6"/><circle cx="709.6" cy="245.8" r="1.8" fill="#8a8a8a"/><ellipse cx="477.3" cy="257.3" rx="3.2" ry="1.9" fill="#cfcfcf"/><circle cx="477.3" cy="257.3" r="0.9" fill="#555"/><rect x="537.6" y="253.3" width="8" height="8" fill="#e8eee8"/><circle cx="541.6" cy="257.3" r="3" fill="#5c9a68"/><path d="M539.5 255.3 l4 4 M543.5 255.3 l-4 4" stroke="#dfe" stroke-width="0.6"/><circle cx="709.6" cy="257.3" r="1.8" fill="#8a8a8a"/><ellipse cx="477.3" cy="268.8" rx="3.2" ry="1.9" fill="#cfcfcf"/><circle cx="477.3" cy="268.8" r="0.9" fill="#555"/><rect x="537.6" y="264.8" width="8" height="8" fill="#e8eee8"/><circle cx="541.6" cy="268.8" r="3" fill="#5c9a68"/><path d="M539.5 266.8 l4 4 M543.5 266.8 l-4 4" stroke="#dfe" stroke-width="0.6"/><circle cx="709.6" cy="268.8" r="1.8" fill="#8a8a8a"/><ellipse cx="477.3" cy="280.3" rx="3.2" ry="1.9" fill="#cfcfcf"/><circle cx="477.3" cy="280.3" r="0.9" fill="#555"/><rect x="537.6" y="276.3" width="8" height="8" fill="#e8eee8"/><circle cx="541.6" cy="280.3" r="3" fill="#5c9a68"/><path d="M539.5 278.3 l4 4 M543.5 278.3 l-4 4" stroke="#dfe" stroke-width="0.6"/><circle cx="709.6" cy="280.3" r="1.8" fill="#8a8a8a"/><ellipse cx="477.3" cy="291.8" rx="3.2" ry="1.9" fill="#cfcfcf"/><circle cx="477.3" cy="291.8" r="0.9" fill="#555"/><rect x="537.6" y="287.8" width="8" height="8" fill="#e8eee8"/><circle cx="541.6" cy="291.8" r="3" fill="#5c9a68"/><path d="M539.5 289.8 l4 4 M543.5 289.8 l-4 4" stroke="#dfe" stroke-width="0.6"/><circle cx="709.6" cy="291.8" r="1.8" fill="#8a8a8a"/><ellipse cx="477.3" cy="303.3" rx="3.2" ry="1.9" fill="#cfcfcf"/><circle cx="477.3" cy="303.3" r="0.9" fill="#555"/><rect x="537.6" y="299.3" width="8" height="8" fill="#e0e0e0"/><circle cx="541.6" cy="303.3" r="2.8" fill="none" stroke="#777" stroke-width="0.9"/><circle cx="709.6" cy="303.3" r="1.8" fill="#8a8a8a"/><ellipse cx="477.3" cy="314.8" rx="3.2" ry="1.9" fill="#cfcfcf"/><circle cx="477.3" cy="314.8" r="0.9" fill="#555"/><rect x="537.6" y="310.8" width="8" height="8" fill="#e0e0e0"/><circle cx="541.6" cy="314.8" r="2.8" fill="none" stroke="#777" stroke-width="0.9"/><circle cx="709.6" cy="314.8" r="1.8" fill="#8a8a8a"/><ellipse cx="477.3" cy="326.3" rx="3.2" ry="1.9" fill="#cfcfcf"/><circle cx="477.3" cy="326.3" r="0.9" fill="#555"/><rect x="537.6" y="322.3" width="8" height="8" fill="#e0e0e0"/><circle cx="541.6" cy="326.3" r="2.8" fill="none" stroke="#777" stroke-width="0.9"/><circle cx="709.6" cy="326.3" r="1.8" fill="#8a8a8a"/><ellipse cx="477.3" cy="337.8" rx="3.2" ry="1.9" fill="#cfcfcf"/><circle cx="477.3" cy="337.8" r="0.9" fill="#555"/><rect x="537.6" y="333.8" width="8" height="8" fill="#e0e0e0"/><circle cx="541.6" cy="337.8" r="2.8" fill="none" stroke="#777" stroke-width="0.9"/><circle cx="709.6" cy="337.8" r="1.8" fill="#8a8a8a"/><ellipse cx="477.3" cy="349.3" rx="3.2" ry="1.9" fill="#cfcfcf"/><circle cx="477.3" cy="349.3" r="0.9" fill="#555"/><rect x="537.6" y="345.3" width="8" height="8" fill="#e0e0e0"/><circle cx="541.6" cy="349.3" r="2.8" fill="none" stroke="#777" stroke-width="0.9"/><circle cx="709.6" cy="349.3" r="1.8" fill="#8a8a8a"/><ellipse cx="477.3" cy="360.8" rx="3.2" ry="1.9" fill="#cfcfcf"/><circle cx="477.3" cy="360.8" r="0.9" fill="#555"/><rect x="537.6" y="356.8" width="8" height="8" fill="#e0e0e0"/><circle cx="541.6" cy="360.8" r="2.8" fill="none" stroke="#777" stroke-width="0.9"/><circle cx="709.6" cy="360.8" r="1.8" fill="#8a8a8a"/><ellipse cx="477.3" cy="372.3" rx="3.2" ry="1.9" fill="#cfcfcf"/><circle cx="477.3" cy="372.3" r="0.9" fill="#555"/><rect x="537.6" y="368.3" width="8" height="8" fill="#e0e0e0"/><circle cx="541.6" cy="372.3" r="2.8" fill="none" stroke="#777" stroke-width="0.9"/><circle cx="709.6" cy="372.3" r="1.8" fill="#8a8a8a"/><ellipse cx="477.3" cy="383.8" rx="3.2" ry="1.9" fill="#cfcfcf"/><circle cx="477.3" cy="383.8" r="0.9" fill="#555"/><rect x="537.6" y="379.8" width="8" height="8" fill="#e0e0e0"/><circle cx="541.6" cy="383.8" r="2.8" fill="none" stroke="#777" stroke-width="0.9"/><circle cx="709.6" cy="383.8" r="1.8" fill="#8a8a8a"/><ellipse cx="477.3" cy="395.3" rx="3.2" ry="1.9" fill="#cfcfcf"/><circle cx="477.3" cy="395.3" r="0.9" fill="#555"/><rect x="537.6" y="391.3" width="8" height="8" fill="#d8d8d8"/><path d="M538.5 393.3 h6 M538.5 395.3 h6 M538.5 397.3 h6" stroke="#888" stroke-width="0.6"/><circle cx="709.6" cy="395.3" r="1.8" fill="#8a8a8a"/><ellipse cx="477.3" cy="406.8" rx="3.2" ry="1.9" fill="#cfcfcf"/><circle cx="477.3" cy="406.8" r="0.9" fill="#555"/><rect x="537.6" y="402.8" width="8" height="8" fill="#d8d8d8"/><path d="M538.5 404.8 h6 M538.5 406.8 h6 M538.5 408.8 h6" stroke="#888" stroke-width="0.6"/><circle cx="709.6" cy="406.8" r="1.8" fill="#8a8a8a"/>
 <g fill="none" stroke="#9a9a9a" stroke-width="0.9">
  <circle cx="651" cy="507.5" r="2.2"/><path d="M649.5 509 l-2 2"/>
  <rect x="662" y="505.5" width="5" height="5"/>
  <path d="M676.5 508.5 h6 M679.5 505.5 v6" stroke="#777"/>
  <rect x="691" y="505.5" width="5" height="5" stroke="#777"/>
  <path d="M705 506 h5 M706 506 v5 h3 v-5"/>
 </g>
</svg>
<svg style="left:0;top:0" width="810" height="523"><line x1="549.6" y1="29.6" x2="510.6" y2="84" stroke="#111" stroke-width="2"/></svg>
</body></html>
